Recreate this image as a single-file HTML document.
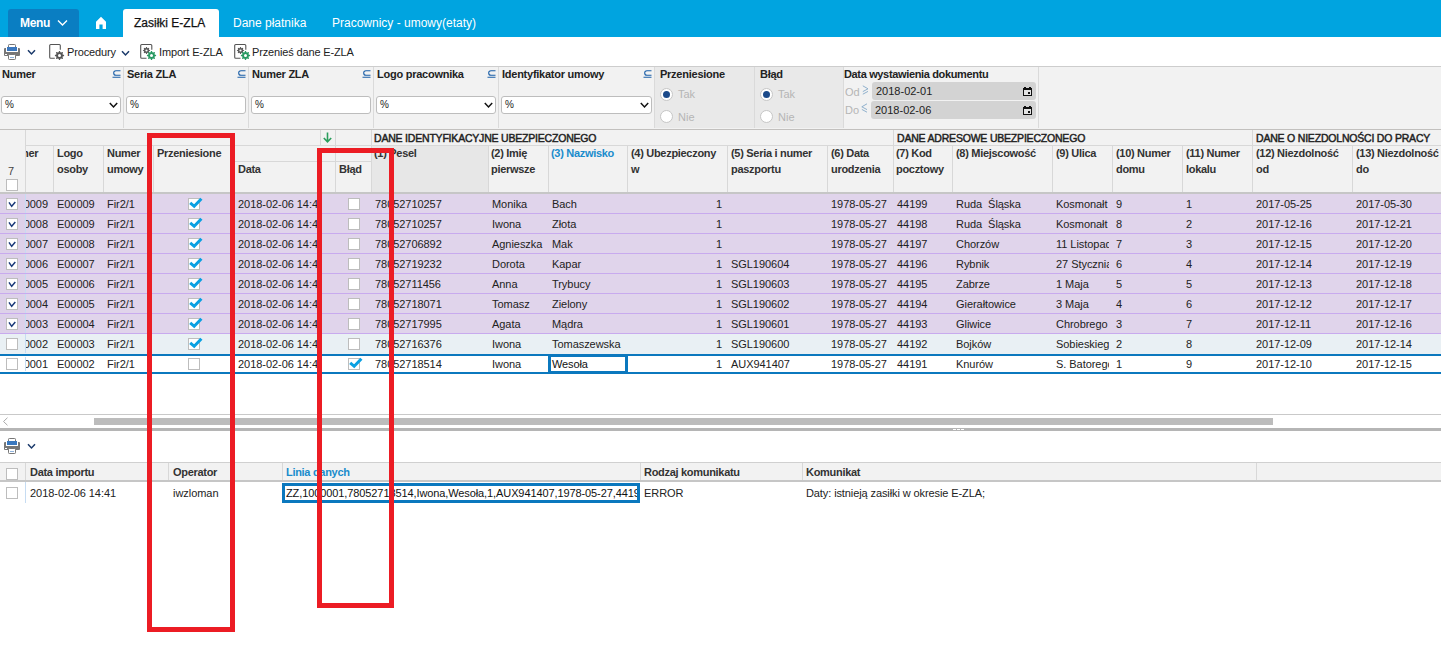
<!DOCTYPE html><html><head><meta charset="utf-8"><style>
*{margin:0;padding:0;box-sizing:border-box}
html,body{width:1441px;height:664px;overflow:hidden;background:#fff;font-family:"Liberation Sans",sans-serif;font-size:11px;color:#222}
.abs{position:absolute}
.t{position:absolute;white-space:nowrap;line-height:12px}
.b{font-weight:bold}
.ln{position:absolute;background:#d9d9d9}
.cb{position:absolute;width:12px;height:12px;background:#fff;border:1px solid #bdbdbd}
.clip{position:absolute;overflow:hidden}
</style></head><body>
<div class="abs" style="left:0px;top:0px;width:1441px;height:37px;background:#00a4e0;"></div>
<div class="abs" style="left:8px;top:9px;width:71px;height:28px;background:#0a7ec2;border-radius:3px 3px 0 0"></div>
<div class="t" style="left:20px;top:16px;color:#fff;font-weight:bold;font-size:12px;line-height:14px;letter-spacing:-0.3px">Menu</div>
<svg class="abs" style="left:57px;top:19px" width="11" height="8" viewBox="0 0 11 8"><path d="M1 1.5 L5.5 6 L10 1.5" fill="none" stroke="#fff" stroke-width="1.4"/></svg>
<svg class="abs" style="left:95px;top:16px" width="12" height="14" viewBox="0 0 12 14"><path d="M6 0.8 L11 5.8 L11 13 L7.6 13 L7.6 8.6 L4.4 8.6 L4.4 13 L1 13 L1 5.8 Z" fill="#fff"/></svg>
<div class="abs" style="left:123px;top:9px;width:96px;height:28px;background:#fff;border-radius:3px 3px 0 0"></div>
<div class="t" style="left:134px;top:16px;color:#111;font-size:12px;line-height:14px;-webkit-text-stroke:0.25px #111">Zasiłki E-ZLA</div>
<div class="t" style="left:233px;top:16px;color:#fff;font-size:12px;line-height:14px">Dane płatnika</div>
<div class="t" style="left:332px;top:16px;color:#fff;font-size:12px;line-height:14px">Pracownicy - umowy(etaty)</div>
<svg class="abs" style="left:4px;top:44px" width="16" height="16" viewBox="0 0 16 16">
<rect x="4.5" y="0.5" width="7" height="4" rx="0.8" fill="#fff" stroke="#777" stroke-width="1"/>
<rect x="0" y="4" width="16" height="8" rx="1" fill="#777"/>
<rect x="2" y="4" width="12" height="4" fill="#fff"/>
<rect x="3" y="3" width="10" height="4" fill="#3a78bf"/>
<rect x="1" y="10" width="2" height="1" fill="#fff"/>
<rect x="4.5" y="10.5" width="7" height="5" rx="0.8" fill="#fff" stroke="#777" stroke-width="1"/>
<rect x="6" y="13" width="4" height="1" fill="#8eb2dc"/>
</svg>
<svg class="abs" style="left:27px;top:49px" width="9" height="7" viewBox="0 0 9 7"><path d="M1 1.2 L4.5 5 L8 1.2" fill="none" stroke="#1b3a6b" stroke-width="1.5"/></svg>
<svg class="abs" style="left:48px;top:43px" width="18" height="18" viewBox="0 0 18 18"><path d="M12.3 6.7 V2.5 A1 1 0 0 0 11.3 1.5 H2.7 A1 1 0 0 0 1.7 2.5 V14.3 A1 1 0 0 0 2.7 15.3 H6.8" fill="none" stroke="#555" stroke-width="1.1"/><polygon points="11.05,7.92 11.95,7.92 12.49,9.24 13.10,9.50 14.42,8.94 15.06,9.58 14.50,10.90 14.76,11.51 16.08,12.05 16.08,12.95 14.76,13.49 14.50,14.10 15.06,15.42 14.42,16.06 13.10,15.50 12.49,15.76 11.95,17.08 11.05,17.08 10.51,15.76 9.90,15.50 8.58,16.06 7.94,15.42 8.50,14.10 8.24,13.49 6.92,12.95 6.92,12.05 8.24,11.51 8.50,10.90 7.94,9.58 8.58,8.94 9.90,9.50 10.51,9.24" fill="#555"/><circle cx="11.5" cy="12.5" r="1.50" fill="#fff"/></svg>
<div class="t" style="left:67px;top:46px;font-size:11px;color:#222;letter-spacing:-0.15px">Procedury</div>
<svg class="abs" style="left:121px;top:50px" width="9" height="7" viewBox="0 0 9 7"><path d="M1 1.2 L4.5 5 L8 1.2" fill="none" stroke="#1b3a6b" stroke-width="1.5"/></svg>
<svg class="abs" style="left:139px;top:43px" width="18" height="18" viewBox="0 0 18 18"><path d="M12.8 6.7 V2.5 A1 1 0 0 0 11.8 1.5 H2.7 A1 1 0 0 0 1.7 2.5 V14.3 A1 1 0 0 0 2.7 15.3 H7.5" fill="none" stroke="#555" stroke-width="1.1"/><polygon points="7.15,3.92 7.85,3.92 8.27,4.95 8.76,5.15 9.78,4.72 10.28,5.22 9.85,6.24 10.05,6.73 11.08,7.15 11.08,7.85 10.05,8.27 9.85,8.76 10.28,9.78 9.78,10.28 8.76,9.85 8.27,10.05 7.85,11.08 7.15,11.08 6.73,10.05 6.24,9.85 5.22,10.28 4.72,9.78 5.15,8.76 4.95,8.27 3.92,7.85 3.92,7.15 4.95,6.73 5.15,6.24 4.72,5.22 5.22,4.72 6.24,5.15 6.73,4.95" fill="#5a5a5a"/><circle cx="7.5" cy="7.5" r="1.10" fill="#fff"/><polygon points="12.05,7.92 12.95,7.92 13.49,9.24 14.10,9.50 15.42,8.94 16.06,9.58 15.50,10.90 15.76,11.51 17.08,12.05 17.08,12.95 15.76,13.49 15.50,14.10 16.06,15.42 15.42,16.06 14.10,15.50 13.49,15.76 12.95,17.08 12.05,17.08 11.51,15.76 10.90,15.50 9.58,16.06 8.94,15.42 9.50,14.10 9.24,13.49 7.92,12.95 7.92,12.05 9.24,11.51 9.50,10.90 8.94,9.58 9.58,8.94 10.90,9.50 11.51,9.24" fill="#2a9a63"/><circle cx="12.5" cy="12.5" r="1.50" fill="#fff"/></svg>
<div class="t" style="left:159px;top:46px;font-size:11px;color:#222;letter-spacing:-0.15px">Import E-ZLA</div>
<svg class="abs" style="left:233px;top:43px" width="18" height="18" viewBox="0 0 18 18"><path d="M12.8 6.7 V2.5 A1 1 0 0 0 11.8 1.5 H2.7 A1 1 0 0 0 1.7 2.5 V14.3 A1 1 0 0 0 2.7 15.3 H7.5" fill="none" stroke="#555" stroke-width="1.1"/><polygon points="7.15,3.92 7.85,3.92 8.27,4.95 8.76,5.15 9.78,4.72 10.28,5.22 9.85,6.24 10.05,6.73 11.08,7.15 11.08,7.85 10.05,8.27 9.85,8.76 10.28,9.78 9.78,10.28 8.76,9.85 8.27,10.05 7.85,11.08 7.15,11.08 6.73,10.05 6.24,9.85 5.22,10.28 4.72,9.78 5.15,8.76 4.95,8.27 3.92,7.85 3.92,7.15 4.95,6.73 5.15,6.24 4.72,5.22 5.22,4.72 6.24,5.15 6.73,4.95" fill="#5a5a5a"/><circle cx="7.5" cy="7.5" r="1.10" fill="#fff"/><polygon points="12.05,7.92 12.95,7.92 13.49,9.24 14.10,9.50 15.42,8.94 16.06,9.58 15.50,10.90 15.76,11.51 17.08,12.05 17.08,12.95 15.76,13.49 15.50,14.10 16.06,15.42 15.42,16.06 14.10,15.50 13.49,15.76 12.95,17.08 12.05,17.08 11.51,15.76 10.90,15.50 9.58,16.06 8.94,15.42 9.50,14.10 9.24,13.49 7.92,12.95 7.92,12.05 9.24,11.51 9.50,10.90 8.94,9.58 9.58,8.94 10.90,9.50 11.51,9.24" fill="#2a9a63"/><circle cx="12.5" cy="12.5" r="1.50" fill="#fff"/></svg>
<div class="t" style="left:252px;top:46px;font-size:11px;color:#222;letter-spacing:-0.15px">Przenieś dane E-ZLA</div>
<div class="abs" style="left:0px;top:66px;width:1441px;height:64px;background:#f2f2f2;border-top:1px solid #cdcdcd;border-bottom:1px solid #c2c0be"></div>
<div class="abs" style="left:654px;top:67px;width:189px;height:61px;background:#e9e9e9;"></div>
<div class="abs" style="left:123px;top:67px;width:1px;height:61px;background:#dadada;"></div>
<div class="abs" style="left:248px;top:67px;width:1px;height:61px;background:#dadada;"></div>
<div class="abs" style="left:373px;top:67px;width:1px;height:61px;background:#dadada;"></div>
<div class="abs" style="left:498px;top:67px;width:1px;height:61px;background:#dadada;"></div>
<div class="abs" style="left:654px;top:67px;width:1px;height:61px;background:#dadada;"></div>
<div class="abs" style="left:754px;top:67px;width:1px;height:61px;background:#dadada;"></div>
<div class="abs" style="left:843px;top:67px;width:1px;height:61px;background:#dadada;"></div>
<div class="abs" style="left:1038px;top:67px;width:1px;height:61px;background:#dadada;"></div>
<div class="t" style="left:2px;top:68px;font-weight:bold;letter-spacing:-0.25px">Numer</div>
<svg class="abs" style="left:112px;top:70px" width="9" height="8" viewBox="0 0 9 8"><path d="M8.5 0.7 H4 A2.3 2.3 0 0 0 4 5.3 H8.5 M0.5 7.3 H8.5" fill="none" stroke="#1b5fa8" stroke-width="1.1"/></svg>
<div class="abs" style="left:1px;top:96px;width:120px;height:18px;background:#fff;border:1px solid #bdbdbd;border-radius:3px"></div>
<div class="t" style="left:5px;top:99px;font-size:10px">%</div>
<svg class="abs" style="left:109px;top:102px" width="9" height="7" viewBox="0 0 9 7"><path d="M0.8 1 L4.5 5 L8.2 1" fill="none" stroke="#111" stroke-width="1.5"/></svg>
<div class="t" style="left:127px;top:68px;font-weight:bold;letter-spacing:-0.25px">Seria ZLA</div>
<svg class="abs" style="left:237px;top:70px" width="9" height="8" viewBox="0 0 9 8"><path d="M8.5 0.7 H4 A2.3 2.3 0 0 0 4 5.3 H8.5 M0.5 7.3 H8.5" fill="none" stroke="#1b5fa8" stroke-width="1.1"/></svg>
<div class="abs" style="left:126px;top:96px;width:120px;height:18px;background:#fff;border:1px solid #bdbdbd;border-radius:3px"></div>
<div class="t" style="left:130px;top:99px;font-size:10px">%</div>
<div class="t" style="left:252px;top:68px;font-weight:bold;letter-spacing:-0.25px">Numer ZLA</div>
<svg class="abs" style="left:362px;top:70px" width="9" height="8" viewBox="0 0 9 8"><path d="M8.5 0.7 H4 A2.3 2.3 0 0 0 4 5.3 H8.5 M0.5 7.3 H8.5" fill="none" stroke="#1b5fa8" stroke-width="1.1"/></svg>
<div class="abs" style="left:251px;top:96px;width:120px;height:18px;background:#fff;border:1px solid #bdbdbd;border-radius:3px"></div>
<div class="t" style="left:255px;top:99px;font-size:10px">%</div>
<div class="t" style="left:377px;top:68px;font-weight:bold;letter-spacing:-0.25px">Logo pracownika</div>
<svg class="abs" style="left:487px;top:70px" width="9" height="8" viewBox="0 0 9 8"><path d="M8.5 0.7 H4 A2.3 2.3 0 0 0 4 5.3 H8.5 M0.5 7.3 H8.5" fill="none" stroke="#1b5fa8" stroke-width="1.1"/></svg>
<div class="abs" style="left:376px;top:96px;width:120px;height:18px;background:#fff;border:1px solid #bdbdbd;border-radius:3px"></div>
<div class="t" style="left:380px;top:99px;font-size:10px">%</div>
<svg class="abs" style="left:484px;top:102px" width="9" height="7" viewBox="0 0 9 7"><path d="M0.8 1 L4.5 5 L8.2 1" fill="none" stroke="#111" stroke-width="1.5"/></svg>
<div class="t" style="left:502px;top:68px;font-weight:bold;letter-spacing:-0.25px">Identyfikator umowy</div>
<svg class="abs" style="left:643px;top:70px" width="9" height="8" viewBox="0 0 9 8"><path d="M8.5 0.7 H4 A2.3 2.3 0 0 0 4 5.3 H8.5 M0.5 7.3 H8.5" fill="none" stroke="#1b5fa8" stroke-width="1.1"/></svg>
<div class="abs" style="left:501px;top:96px;width:151px;height:18px;background:#fff;border:1px solid #bdbdbd;border-radius:3px"></div>
<div class="t" style="left:505px;top:99px;font-size:10px">%</div>
<svg class="abs" style="left:640px;top:102px" width="9" height="7" viewBox="0 0 9 7"><path d="M0.8 1 L4.5 5 L8.2 1" fill="none" stroke="#111" stroke-width="1.5"/></svg>
<div class="t" style="left:660px;top:68px;font-weight:bold;letter-spacing:-0.25px">Przeniesione</div>
<div class="abs" style="left:660px;top:88px;width:13px;height:13px;border-radius:50%;background:#fff;border:1px solid #c6c6c6"></div>
<div class="abs" style="left:663px;top:91px;width:7px;height:7px;border-radius:50%;background:#1b4a8a"></div>
<div class="t" style="left:678px;top:88px;color:#b5b5b5;font-size:11px">Tak</div>
<div class="abs" style="left:660px;top:110px;width:13px;height:13px;border-radius:50%;background:#fff;border:1px solid #c6c6c6"></div>
<div class="t" style="left:678px;top:111px;color:#b5b5b5;font-size:11px">Nie</div>
<div class="t" style="left:760px;top:68px;font-weight:bold;letter-spacing:-0.25px">Błąd</div>
<div class="abs" style="left:760px;top:88px;width:13px;height:13px;border-radius:50%;background:#fff;border:1px solid #c6c6c6"></div>
<div class="abs" style="left:763px;top:91px;width:7px;height:7px;border-radius:50%;background:#1b4a8a"></div>
<div class="t" style="left:778px;top:88px;color:#b5b5b5;font-size:11px">Tak</div>
<div class="abs" style="left:760px;top:110px;width:13px;height:13px;border-radius:50%;background:#fff;border:1px solid #c6c6c6"></div>
<div class="t" style="left:778px;top:111px;color:#b5b5b5;font-size:11px">Nie</div>
<div class="t" style="left:844px;top:68px;font-weight:bold;letter-spacing:-0.35px">Data wystawienia dokumentu</div>
<div class="t" style="left:845px;top:86px;color:#b5b5b5">Od</div>
<svg class="abs" style="left:862px;top:85px" width="7" height="10" viewBox="0 0 7 10"><path d="M0.8 0.8 L6 3.8 L0.8 6.6 M0.8 9.2 L6 6.4" fill="none" stroke="#8fb0cc" stroke-width="1"/></svg>
<div class="abs" style="left:872px;top:82px;width:164px;height:18px;background:#d3d3d3;border-radius:3px"></div>
<div class="t" style="left:876px;top:85px;font-size:11px;color:#222">2018-02-01</div>
<svg class="abs" style="left:1023px;top:87px" width="9" height="9" viewBox="0 0 9 9" shape-rendering="crispEdges"><rect x="1" y="0" width="2" height="1" fill="#111"/><rect x="6" y="0" width="2" height="1" fill="#111"/><rect x="0" y="1" width="9" height="2" fill="#111"/><rect x="0" y="1" width="1" height="8" fill="#111"/><rect x="8" y="1" width="1" height="8" fill="#111"/><rect x="0" y="8" width="9" height="1" fill="#111"/><rect x="1" y="3" width="7" height="5" fill="#e4e4e4"/><rect x="5" y="5" width="2" height="2" fill="#111"/></svg>
<div class="t" style="left:845px;top:104px;color:#b5b5b5">Do</div>
<svg class="abs" style="left:861px;top:103px" width="7" height="10" viewBox="0 0 7 10"><path d="M6 0.8 L0.8 3.8 L6 6.6 M6 9.2 L0.8 6.4" fill="none" stroke="#8fb0cc" stroke-width="1"/></svg>
<div class="abs" style="left:871px;top:101px;width:165px;height:18px;background:#d3d3d3;border-radius:3px"></div>
<div class="t" style="left:875px;top:104px;font-size:11px;color:#222">2018-02-06</div>
<svg class="abs" style="left:1023px;top:106px" width="9" height="9" viewBox="0 0 9 9" shape-rendering="crispEdges"><rect x="1" y="0" width="2" height="1" fill="#111"/><rect x="6" y="0" width="2" height="1" fill="#111"/><rect x="0" y="1" width="9" height="2" fill="#111"/><rect x="0" y="1" width="1" height="8" fill="#111"/><rect x="8" y="1" width="1" height="8" fill="#111"/><rect x="0" y="8" width="9" height="1" fill="#111"/><rect x="1" y="3" width="7" height="5" fill="#e4e4e4"/><rect x="5" y="5" width="2" height="2" fill="#111"/></svg>
<div class="abs" style="left:0px;top:130px;width:1441px;height:62px;background:#f2f2f2;"></div>
<div class="abs" style="left:371px;top:146px;width:117px;height:46px;background:#e7e7e7;"></div>
<div class="abs" style="left:0px;top:192px;width:1441px;height:2px;background:#c6c6c6;"></div>
<div class="abs" style="left:25px;top:145px;width:1416px;height:1px;background:#d8d8d8;"></div>
<div class="abs" style="left:234px;top:161px;width:137px;height:1px;background:#d8d8d8;"></div>
<div class="abs" style="left:25px;top:130px;width:1px;height:62px;background:#d8d8d8;"></div>
<div class="abs" style="left:53px;top:145px;width:1px;height:47px;background:#d8d8d8;"></div>
<div class="abs" style="left:103px;top:145px;width:1px;height:47px;background:#d8d8d8;"></div>
<div class="abs" style="left:153px;top:145px;width:1px;height:47px;background:#d8d8d8;"></div>
<div class="abs" style="left:234px;top:145px;width:1px;height:47px;background:#d8d8d8;"></div>
<div class="abs" style="left:320px;top:130px;width:1px;height:15px;background:#d8d8d8;"></div>
<div class="abs" style="left:335px;top:130px;width:1px;height:62px;background:#d8d8d8;"></div>
<div class="abs" style="left:371px;top:130px;width:1px;height:62px;background:#d8d8d8;"></div>
<div class="abs" style="left:488px;top:145px;width:1px;height:47px;background:#d8d8d8;"></div>
<div class="abs" style="left:548px;top:145px;width:1px;height:47px;background:#d8d8d8;"></div>
<div class="abs" style="left:627px;top:145px;width:1px;height:47px;background:#d8d8d8;"></div>
<div class="abs" style="left:727px;top:145px;width:1px;height:47px;background:#d8d8d8;"></div>
<div class="abs" style="left:827px;top:145px;width:1px;height:47px;background:#d8d8d8;"></div>
<div class="abs" style="left:893px;top:130px;width:1px;height:62px;background:#d8d8d8;"></div>
<div class="abs" style="left:952px;top:145px;width:1px;height:47px;background:#d8d8d8;"></div>
<div class="abs" style="left:1052px;top:145px;width:1px;height:47px;background:#d8d8d8;"></div>
<div class="abs" style="left:1112px;top:145px;width:1px;height:47px;background:#d8d8d8;"></div>
<div class="abs" style="left:1182px;top:145px;width:1px;height:47px;background:#d8d8d8;"></div>
<div class="abs" style="left:1252px;top:130px;width:1px;height:62px;background:#d8d8d8;"></div>
<div class="abs" style="left:1352px;top:145px;width:1px;height:47px;background:#d8d8d8;"></div>
<div class="t" style="left:374px;top:132px;color:#222;letter-spacing:-0.2px;font-size:10.5px;-webkit-text-stroke:0.45px #222">DANE IDENTYFIKACYJNE UBEZPIECZONEGO</div>
<div class="t" style="left:897px;top:132px;color:#222;letter-spacing:-0.2px;font-size:10.5px;-webkit-text-stroke:0.45px #222">DANE ADRESOWE UBEZPIECZONEGO</div>
<div class="t" style="left:1256px;top:132px;color:#222;letter-spacing:-0.2px;font-size:10.5px;-webkit-text-stroke:0.45px #222">DANE O NIEZDOLNOŚCI DO PRACY</div>
<svg class="abs" style="left:323px;top:132px" width="9" height="11" viewBox="0 0 9 11"><path d="M4.5 0.5 V10 M0.8 6 L4.5 9.8 L8.2 6" fill="none" stroke="#2a9d5c" stroke-width="1.6"/></svg>
<div class="t" style="left:8px;top:165px;color:#444">7</div>
<div class="cb" style="left:6px;top:179px"></div>
<div class="clip" style="left:26px;top:145px;width:27px;height:40px"><div class="t" style="left:-21px;top:0;font-weight:bold;color:#333;letter-spacing:-0.3px;line-height:16px;">Numer</div></div>
<div class="t" style="left:57px;top:145px;font-weight:bold;color:#333;letter-spacing:-0.3px;line-height:16px;">Logo<br>osoby</div>
<div class="t" style="left:107px;top:145px;font-weight:bold;color:#333;letter-spacing:-0.3px;line-height:16px;">Numer<br>umowy</div>
<div class="t" style="left:157px;top:145px;font-weight:bold;color:#333;letter-spacing:-0.3px;line-height:16px;">Przeniesione</div>
<div class="t" style="left:238px;top:161px;font-weight:bold;color:#333;letter-spacing:-0.3px;line-height:16px;">Data</div>
<div class="t" style="left:339px;top:161px;font-weight:bold;color:#333;letter-spacing:-0.3px;line-height:16px;">Błąd</div>
<div class="t" style="left:374px;top:145px;font-weight:bold;color:#333;letter-spacing:-0.3px;line-height:16px;">(1) Pesel</div>
<div class="t" style="left:491px;top:145px;font-weight:bold;color:#333;letter-spacing:-0.3px;line-height:16px;">(2) Imię<br>pierwsze</div>
<div class="t" style="left:551px;top:145px;font-weight:bold;color:#333;letter-spacing:-0.3px;line-height:16px;color:#1a8ccc">(3) Nazwisko</div>
<div class="t" style="left:631px;top:145px;font-weight:bold;color:#333;letter-spacing:-0.3px;line-height:16px;">(4) Ubezpieczony<br>w</div>
<div class="t" style="left:731px;top:145px;font-weight:bold;color:#333;letter-spacing:-0.3px;line-height:16px;">(5) Seria i numer<br>paszportu</div>
<div class="t" style="left:831px;top:145px;font-weight:bold;color:#333;letter-spacing:-0.3px;line-height:16px;">(6) Data<br>urodzenia</div>
<div class="t" style="left:896px;top:145px;font-weight:bold;color:#333;letter-spacing:-0.3px;line-height:16px;">(7) Kod<br>pocztowy</div>
<div class="t" style="left:956px;top:145px;font-weight:bold;color:#333;letter-spacing:-0.3px;line-height:16px;">(8) Miejscowość</div>
<div class="t" style="left:1056px;top:145px;font-weight:bold;color:#333;letter-spacing:-0.3px;line-height:16px;">(9) Ulica</div>
<div class="t" style="left:1116px;top:145px;font-weight:bold;color:#333;letter-spacing:-0.3px;line-height:16px;">(10) Numer<br>domu</div>
<div class="t" style="left:1186px;top:145px;font-weight:bold;color:#333;letter-spacing:-0.3px;line-height:16px;">(11) Numer<br>lokalu</div>
<div class="t" style="left:1256px;top:145px;font-weight:bold;color:#333;letter-spacing:-0.3px;line-height:16px;">(12) Niezdolność<br>od</div>
<div class="t" style="left:1356px;top:145px;font-weight:bold;color:#333;letter-spacing:-0.3px;line-height:16px;">(13) Niezdolność<br>do</div>
<div class="abs" style="left:0px;top:194px;width:1441px;height:19px;background:#e0d4eb;"></div>
<div class="abs" style="left:0px;top:194px;width:25px;height:19px;background:#ddd1e9;"></div>
<div class="abs" style="left:0px;top:213px;width:1441px;height:1px;background:#c8aaee;"></div>
<div class="abs" style="left:25px;top:194px;width:1px;height:19px;background:#c6dcf2;"></div>
<div class="cb" style="left:6px;top:198px"></div>
<svg class="abs" style="left:6px;top:198px" width="12" height="12" viewBox="0 0 12 12"><path d="M3 4.3 L5.7 8.3 L9.3 4" fill="none" stroke="#1b3a7a" stroke-width="1.5"/></svg>
<div class="clip" style="left:26px;top:198px;width:27px;height:14px"><div class="t" style="right:5px;top:0;letter-spacing:-0.05px;color:#222">0009</div></div>
<div class="clip" style="left:53px;top:198px;width:47px;height:14px"><div class="t" style="left:4px;top:0;letter-spacing:-0.05px;color:#222">E00009</div></div>
<div class="clip" style="left:103px;top:198px;width:47px;height:14px"><div class="t" style="left:4px;top:0;letter-spacing:-0.05px;color:#222">Fir2/1</div></div>
<div class="cb" style="left:188px;top:198px"></div>
<svg class="abs" style="left:188px;top:196px" width="16" height="14" viewBox="0 0 16 14"><path d="M2.2 6.8 L6.2 10.3 L13.4 2.8" fill="none" stroke="#0aa0e2" stroke-width="3"/></svg>
<div class="clip" style="left:234px;top:198px;width:83px;height:14px"><div class="t" style="left:4px;top:0;letter-spacing:-0.05px;color:#222">2018-02-06 14:41</div></div>
<div class="cb" style="left:348px;top:198px"></div>
<div class="clip" style="left:371px;top:198px;width:114px;height:14px"><div class="t" style="left:4px;top:0;letter-spacing:-0.05px;color:#222">78052710257</div></div>
<div class="clip" style="left:488px;top:198px;width:57px;height:14px"><div class="t" style="left:4px;top:0;letter-spacing:-0.05px;color:#222">Monika</div></div>
<div class="clip" style="left:548px;top:198px;width:76px;height:14px"><div class="t" style="left:4px;top:0;letter-spacing:-0.05px;color:#222">Bach</div></div>
<div class="clip" style="left:627px;top:198px;width:100px;height:14px"><div class="t" style="right:5px;top:0;letter-spacing:-0.05px;color:#222">1</div></div>
<div class="clip" style="left:727px;top:198px;width:97px;height:14px"><div class="t" style="left:4px;top:0;letter-spacing:-0.05px;color:#222"></div></div>
<div class="clip" style="left:827px;top:198px;width:63px;height:14px"><div class="t" style="left:4px;top:0;letter-spacing:-0.05px;color:#222">1978-05-27</div></div>
<div class="clip" style="left:893px;top:198px;width:56px;height:14px"><div class="t" style="left:4px;top:0;letter-spacing:-0.05px;color:#222">44199</div></div>
<div class="clip" style="left:952px;top:198px;width:97px;height:14px"><div class="t" style="left:4px;top:0;letter-spacing:-0.05px;color:#222">Ruda&nbsp; Śląska</div></div>
<div class="clip" style="left:1052px;top:198px;width:57px;height:14px"><div class="t" style="left:4px;top:0;letter-spacing:-0.05px;color:#222">Kosmonałt</div></div>
<div class="clip" style="left:1112px;top:198px;width:67px;height:14px"><div class="t" style="left:4px;top:0;letter-spacing:-0.05px;color:#222">9</div></div>
<div class="clip" style="left:1182px;top:198px;width:67px;height:14px"><div class="t" style="left:4px;top:0;letter-spacing:-0.05px;color:#222">1</div></div>
<div class="clip" style="left:1252px;top:198px;width:97px;height:14px"><div class="t" style="left:4px;top:0;letter-spacing:-0.05px;color:#222">2017-05-25</div></div>
<div class="clip" style="left:1352px;top:198px;width:86px;height:14px"><div class="t" style="left:4px;top:0;letter-spacing:-0.05px;color:#222">2017-05-30</div></div>
<div class="abs" style="left:0px;top:214px;width:1441px;height:19px;background:#e0d4eb;"></div>
<div class="abs" style="left:0px;top:214px;width:25px;height:19px;background:#ddd1e9;"></div>
<div class="abs" style="left:0px;top:233px;width:1441px;height:1px;background:#c8aaee;"></div>
<div class="abs" style="left:25px;top:214px;width:1px;height:19px;background:#c6dcf2;"></div>
<div class="cb" style="left:6px;top:218px"></div>
<svg class="abs" style="left:6px;top:218px" width="12" height="12" viewBox="0 0 12 12"><path d="M3 4.3 L5.7 8.3 L9.3 4" fill="none" stroke="#1b3a7a" stroke-width="1.5"/></svg>
<div class="clip" style="left:26px;top:218px;width:27px;height:14px"><div class="t" style="right:5px;top:0;letter-spacing:-0.05px;color:#222">0008</div></div>
<div class="clip" style="left:53px;top:218px;width:47px;height:14px"><div class="t" style="left:4px;top:0;letter-spacing:-0.05px;color:#222">E00009</div></div>
<div class="clip" style="left:103px;top:218px;width:47px;height:14px"><div class="t" style="left:4px;top:0;letter-spacing:-0.05px;color:#222">Fir2/1</div></div>
<div class="cb" style="left:188px;top:218px"></div>
<svg class="abs" style="left:188px;top:216px" width="16" height="14" viewBox="0 0 16 14"><path d="M2.2 6.8 L6.2 10.3 L13.4 2.8" fill="none" stroke="#0aa0e2" stroke-width="3"/></svg>
<div class="clip" style="left:234px;top:218px;width:83px;height:14px"><div class="t" style="left:4px;top:0;letter-spacing:-0.05px;color:#222">2018-02-06 14:41</div></div>
<div class="cb" style="left:348px;top:218px"></div>
<div class="clip" style="left:371px;top:218px;width:114px;height:14px"><div class="t" style="left:4px;top:0;letter-spacing:-0.05px;color:#222">78052710257</div></div>
<div class="clip" style="left:488px;top:218px;width:57px;height:14px"><div class="t" style="left:4px;top:0;letter-spacing:-0.05px;color:#222">Iwona</div></div>
<div class="clip" style="left:548px;top:218px;width:76px;height:14px"><div class="t" style="left:4px;top:0;letter-spacing:-0.05px;color:#222">Złota</div></div>
<div class="clip" style="left:627px;top:218px;width:100px;height:14px"><div class="t" style="right:5px;top:0;letter-spacing:-0.05px;color:#222">1</div></div>
<div class="clip" style="left:727px;top:218px;width:97px;height:14px"><div class="t" style="left:4px;top:0;letter-spacing:-0.05px;color:#222"></div></div>
<div class="clip" style="left:827px;top:218px;width:63px;height:14px"><div class="t" style="left:4px;top:0;letter-spacing:-0.05px;color:#222">1978-05-27</div></div>
<div class="clip" style="left:893px;top:218px;width:56px;height:14px"><div class="t" style="left:4px;top:0;letter-spacing:-0.05px;color:#222">44198</div></div>
<div class="clip" style="left:952px;top:218px;width:97px;height:14px"><div class="t" style="left:4px;top:0;letter-spacing:-0.05px;color:#222">Ruda&nbsp; Śląska</div></div>
<div class="clip" style="left:1052px;top:218px;width:57px;height:14px"><div class="t" style="left:4px;top:0;letter-spacing:-0.05px;color:#222">Kosmonałt</div></div>
<div class="clip" style="left:1112px;top:218px;width:67px;height:14px"><div class="t" style="left:4px;top:0;letter-spacing:-0.05px;color:#222">8</div></div>
<div class="clip" style="left:1182px;top:218px;width:67px;height:14px"><div class="t" style="left:4px;top:0;letter-spacing:-0.05px;color:#222">2</div></div>
<div class="clip" style="left:1252px;top:218px;width:97px;height:14px"><div class="t" style="left:4px;top:0;letter-spacing:-0.05px;color:#222">2017-12-16</div></div>
<div class="clip" style="left:1352px;top:218px;width:86px;height:14px"><div class="t" style="left:4px;top:0;letter-spacing:-0.05px;color:#222">2017-12-21</div></div>
<div class="abs" style="left:0px;top:234px;width:1441px;height:19px;background:#e0d4eb;"></div>
<div class="abs" style="left:0px;top:234px;width:25px;height:19px;background:#ddd1e9;"></div>
<div class="abs" style="left:0px;top:253px;width:1441px;height:1px;background:#c8aaee;"></div>
<div class="abs" style="left:25px;top:234px;width:1px;height:19px;background:#c6dcf2;"></div>
<div class="cb" style="left:6px;top:238px"></div>
<svg class="abs" style="left:6px;top:238px" width="12" height="12" viewBox="0 0 12 12"><path d="M3 4.3 L5.7 8.3 L9.3 4" fill="none" stroke="#1b3a7a" stroke-width="1.5"/></svg>
<div class="clip" style="left:26px;top:238px;width:27px;height:14px"><div class="t" style="right:5px;top:0;letter-spacing:-0.05px;color:#222">0007</div></div>
<div class="clip" style="left:53px;top:238px;width:47px;height:14px"><div class="t" style="left:4px;top:0;letter-spacing:-0.05px;color:#222">E00008</div></div>
<div class="clip" style="left:103px;top:238px;width:47px;height:14px"><div class="t" style="left:4px;top:0;letter-spacing:-0.05px;color:#222">Fir2/1</div></div>
<div class="cb" style="left:188px;top:238px"></div>
<svg class="abs" style="left:188px;top:236px" width="16" height="14" viewBox="0 0 16 14"><path d="M2.2 6.8 L6.2 10.3 L13.4 2.8" fill="none" stroke="#0aa0e2" stroke-width="3"/></svg>
<div class="clip" style="left:234px;top:238px;width:83px;height:14px"><div class="t" style="left:4px;top:0;letter-spacing:-0.05px;color:#222">2018-02-06 14:41</div></div>
<div class="cb" style="left:348px;top:238px"></div>
<div class="clip" style="left:371px;top:238px;width:114px;height:14px"><div class="t" style="left:4px;top:0;letter-spacing:-0.05px;color:#222">78052706892</div></div>
<div class="clip" style="left:488px;top:238px;width:57px;height:14px"><div class="t" style="left:4px;top:0;letter-spacing:-0.05px;color:#222">Agnieszka</div></div>
<div class="clip" style="left:548px;top:238px;width:76px;height:14px"><div class="t" style="left:4px;top:0;letter-spacing:-0.05px;color:#222">Mak</div></div>
<div class="clip" style="left:627px;top:238px;width:100px;height:14px"><div class="t" style="right:5px;top:0;letter-spacing:-0.05px;color:#222">1</div></div>
<div class="clip" style="left:727px;top:238px;width:97px;height:14px"><div class="t" style="left:4px;top:0;letter-spacing:-0.05px;color:#222"></div></div>
<div class="clip" style="left:827px;top:238px;width:63px;height:14px"><div class="t" style="left:4px;top:0;letter-spacing:-0.05px;color:#222">1978-05-27</div></div>
<div class="clip" style="left:893px;top:238px;width:56px;height:14px"><div class="t" style="left:4px;top:0;letter-spacing:-0.05px;color:#222">44197</div></div>
<div class="clip" style="left:952px;top:238px;width:97px;height:14px"><div class="t" style="left:4px;top:0;letter-spacing:-0.05px;color:#222">Chorzów</div></div>
<div class="clip" style="left:1052px;top:238px;width:57px;height:14px"><div class="t" style="left:4px;top:0;letter-spacing:-0.05px;color:#222">11 Listopada</div></div>
<div class="clip" style="left:1112px;top:238px;width:67px;height:14px"><div class="t" style="left:4px;top:0;letter-spacing:-0.05px;color:#222">7</div></div>
<div class="clip" style="left:1182px;top:238px;width:67px;height:14px"><div class="t" style="left:4px;top:0;letter-spacing:-0.05px;color:#222">3</div></div>
<div class="clip" style="left:1252px;top:238px;width:97px;height:14px"><div class="t" style="left:4px;top:0;letter-spacing:-0.05px;color:#222">2017-12-15</div></div>
<div class="clip" style="left:1352px;top:238px;width:86px;height:14px"><div class="t" style="left:4px;top:0;letter-spacing:-0.05px;color:#222">2017-12-20</div></div>
<div class="abs" style="left:0px;top:254px;width:1441px;height:19px;background:#e0d4eb;"></div>
<div class="abs" style="left:0px;top:254px;width:25px;height:19px;background:#ddd1e9;"></div>
<div class="abs" style="left:0px;top:273px;width:1441px;height:1px;background:#c8aaee;"></div>
<div class="abs" style="left:25px;top:254px;width:1px;height:19px;background:#c6dcf2;"></div>
<div class="cb" style="left:6px;top:258px"></div>
<svg class="abs" style="left:6px;top:258px" width="12" height="12" viewBox="0 0 12 12"><path d="M3 4.3 L5.7 8.3 L9.3 4" fill="none" stroke="#1b3a7a" stroke-width="1.5"/></svg>
<div class="clip" style="left:26px;top:258px;width:27px;height:14px"><div class="t" style="right:5px;top:0;letter-spacing:-0.05px;color:#222">0006</div></div>
<div class="clip" style="left:53px;top:258px;width:47px;height:14px"><div class="t" style="left:4px;top:0;letter-spacing:-0.05px;color:#222">E00007</div></div>
<div class="clip" style="left:103px;top:258px;width:47px;height:14px"><div class="t" style="left:4px;top:0;letter-spacing:-0.05px;color:#222">Fir2/1</div></div>
<div class="cb" style="left:188px;top:258px"></div>
<svg class="abs" style="left:188px;top:256px" width="16" height="14" viewBox="0 0 16 14"><path d="M2.2 6.8 L6.2 10.3 L13.4 2.8" fill="none" stroke="#0aa0e2" stroke-width="3"/></svg>
<div class="clip" style="left:234px;top:258px;width:83px;height:14px"><div class="t" style="left:4px;top:0;letter-spacing:-0.05px;color:#222">2018-02-06 14:41</div></div>
<div class="cb" style="left:348px;top:258px"></div>
<div class="clip" style="left:371px;top:258px;width:114px;height:14px"><div class="t" style="left:4px;top:0;letter-spacing:-0.05px;color:#222">78052719232</div></div>
<div class="clip" style="left:488px;top:258px;width:57px;height:14px"><div class="t" style="left:4px;top:0;letter-spacing:-0.05px;color:#222">Dorota</div></div>
<div class="clip" style="left:548px;top:258px;width:76px;height:14px"><div class="t" style="left:4px;top:0;letter-spacing:-0.05px;color:#222">Kapar</div></div>
<div class="clip" style="left:627px;top:258px;width:100px;height:14px"><div class="t" style="right:5px;top:0;letter-spacing:-0.05px;color:#222">1</div></div>
<div class="clip" style="left:727px;top:258px;width:97px;height:14px"><div class="t" style="left:4px;top:0;letter-spacing:-0.05px;color:#222">SGL190604</div></div>
<div class="clip" style="left:827px;top:258px;width:63px;height:14px"><div class="t" style="left:4px;top:0;letter-spacing:-0.05px;color:#222">1978-05-27</div></div>
<div class="clip" style="left:893px;top:258px;width:56px;height:14px"><div class="t" style="left:4px;top:0;letter-spacing:-0.05px;color:#222">44196</div></div>
<div class="clip" style="left:952px;top:258px;width:97px;height:14px"><div class="t" style="left:4px;top:0;letter-spacing:-0.05px;color:#222">Rybnik</div></div>
<div class="clip" style="left:1052px;top:258px;width:57px;height:14px"><div class="t" style="left:4px;top:0;letter-spacing:-0.05px;color:#222">27 Stycznia</div></div>
<div class="clip" style="left:1112px;top:258px;width:67px;height:14px"><div class="t" style="left:4px;top:0;letter-spacing:-0.05px;color:#222">6</div></div>
<div class="clip" style="left:1182px;top:258px;width:67px;height:14px"><div class="t" style="left:4px;top:0;letter-spacing:-0.05px;color:#222">4</div></div>
<div class="clip" style="left:1252px;top:258px;width:97px;height:14px"><div class="t" style="left:4px;top:0;letter-spacing:-0.05px;color:#222">2017-12-14</div></div>
<div class="clip" style="left:1352px;top:258px;width:86px;height:14px"><div class="t" style="left:4px;top:0;letter-spacing:-0.05px;color:#222">2017-12-19</div></div>
<div class="abs" style="left:0px;top:274px;width:1441px;height:19px;background:#e0d4eb;"></div>
<div class="abs" style="left:0px;top:274px;width:25px;height:19px;background:#ddd1e9;"></div>
<div class="abs" style="left:0px;top:293px;width:1441px;height:1px;background:#c8aaee;"></div>
<div class="abs" style="left:25px;top:274px;width:1px;height:19px;background:#c6dcf2;"></div>
<div class="cb" style="left:6px;top:278px"></div>
<svg class="abs" style="left:6px;top:278px" width="12" height="12" viewBox="0 0 12 12"><path d="M3 4.3 L5.7 8.3 L9.3 4" fill="none" stroke="#1b3a7a" stroke-width="1.5"/></svg>
<div class="clip" style="left:26px;top:278px;width:27px;height:14px"><div class="t" style="right:5px;top:0;letter-spacing:-0.05px;color:#222">0005</div></div>
<div class="clip" style="left:53px;top:278px;width:47px;height:14px"><div class="t" style="left:4px;top:0;letter-spacing:-0.05px;color:#222">E00006</div></div>
<div class="clip" style="left:103px;top:278px;width:47px;height:14px"><div class="t" style="left:4px;top:0;letter-spacing:-0.05px;color:#222">Fir2/1</div></div>
<div class="cb" style="left:188px;top:278px"></div>
<svg class="abs" style="left:188px;top:276px" width="16" height="14" viewBox="0 0 16 14"><path d="M2.2 6.8 L6.2 10.3 L13.4 2.8" fill="none" stroke="#0aa0e2" stroke-width="3"/></svg>
<div class="clip" style="left:234px;top:278px;width:83px;height:14px"><div class="t" style="left:4px;top:0;letter-spacing:-0.05px;color:#222">2018-02-06 14:41</div></div>
<div class="cb" style="left:348px;top:278px"></div>
<div class="clip" style="left:371px;top:278px;width:114px;height:14px"><div class="t" style="left:4px;top:0;letter-spacing:-0.05px;color:#222">78052711456</div></div>
<div class="clip" style="left:488px;top:278px;width:57px;height:14px"><div class="t" style="left:4px;top:0;letter-spacing:-0.05px;color:#222">Anna</div></div>
<div class="clip" style="left:548px;top:278px;width:76px;height:14px"><div class="t" style="left:4px;top:0;letter-spacing:-0.05px;color:#222">Trybucy</div></div>
<div class="clip" style="left:627px;top:278px;width:100px;height:14px"><div class="t" style="right:5px;top:0;letter-spacing:-0.05px;color:#222">1</div></div>
<div class="clip" style="left:727px;top:278px;width:97px;height:14px"><div class="t" style="left:4px;top:0;letter-spacing:-0.05px;color:#222">SGL190603</div></div>
<div class="clip" style="left:827px;top:278px;width:63px;height:14px"><div class="t" style="left:4px;top:0;letter-spacing:-0.05px;color:#222">1978-05-27</div></div>
<div class="clip" style="left:893px;top:278px;width:56px;height:14px"><div class="t" style="left:4px;top:0;letter-spacing:-0.05px;color:#222">44195</div></div>
<div class="clip" style="left:952px;top:278px;width:97px;height:14px"><div class="t" style="left:4px;top:0;letter-spacing:-0.05px;color:#222">Zabrze</div></div>
<div class="clip" style="left:1052px;top:278px;width:57px;height:14px"><div class="t" style="left:4px;top:0;letter-spacing:-0.05px;color:#222">1 Maja</div></div>
<div class="clip" style="left:1112px;top:278px;width:67px;height:14px"><div class="t" style="left:4px;top:0;letter-spacing:-0.05px;color:#222">5</div></div>
<div class="clip" style="left:1182px;top:278px;width:67px;height:14px"><div class="t" style="left:4px;top:0;letter-spacing:-0.05px;color:#222">5</div></div>
<div class="clip" style="left:1252px;top:278px;width:97px;height:14px"><div class="t" style="left:4px;top:0;letter-spacing:-0.05px;color:#222">2017-12-13</div></div>
<div class="clip" style="left:1352px;top:278px;width:86px;height:14px"><div class="t" style="left:4px;top:0;letter-spacing:-0.05px;color:#222">2017-12-18</div></div>
<div class="abs" style="left:0px;top:294px;width:1441px;height:19px;background:#e0d4eb;"></div>
<div class="abs" style="left:0px;top:294px;width:25px;height:19px;background:#ddd1e9;"></div>
<div class="abs" style="left:0px;top:313px;width:1441px;height:1px;background:#c8aaee;"></div>
<div class="abs" style="left:25px;top:294px;width:1px;height:19px;background:#c6dcf2;"></div>
<div class="cb" style="left:6px;top:298px"></div>
<svg class="abs" style="left:6px;top:298px" width="12" height="12" viewBox="0 0 12 12"><path d="M3 4.3 L5.7 8.3 L9.3 4" fill="none" stroke="#1b3a7a" stroke-width="1.5"/></svg>
<div class="clip" style="left:26px;top:298px;width:27px;height:14px"><div class="t" style="right:5px;top:0;letter-spacing:-0.05px;color:#222">0004</div></div>
<div class="clip" style="left:53px;top:298px;width:47px;height:14px"><div class="t" style="left:4px;top:0;letter-spacing:-0.05px;color:#222">E00005</div></div>
<div class="clip" style="left:103px;top:298px;width:47px;height:14px"><div class="t" style="left:4px;top:0;letter-spacing:-0.05px;color:#222">Fir2/1</div></div>
<div class="cb" style="left:188px;top:298px"></div>
<svg class="abs" style="left:188px;top:296px" width="16" height="14" viewBox="0 0 16 14"><path d="M2.2 6.8 L6.2 10.3 L13.4 2.8" fill="none" stroke="#0aa0e2" stroke-width="3"/></svg>
<div class="clip" style="left:234px;top:298px;width:83px;height:14px"><div class="t" style="left:4px;top:0;letter-spacing:-0.05px;color:#222">2018-02-06 14:41</div></div>
<div class="cb" style="left:348px;top:298px"></div>
<div class="clip" style="left:371px;top:298px;width:114px;height:14px"><div class="t" style="left:4px;top:0;letter-spacing:-0.05px;color:#222">78052718071</div></div>
<div class="clip" style="left:488px;top:298px;width:57px;height:14px"><div class="t" style="left:4px;top:0;letter-spacing:-0.05px;color:#222">Tomasz</div></div>
<div class="clip" style="left:548px;top:298px;width:76px;height:14px"><div class="t" style="left:4px;top:0;letter-spacing:-0.05px;color:#222">Zielony</div></div>
<div class="clip" style="left:627px;top:298px;width:100px;height:14px"><div class="t" style="right:5px;top:0;letter-spacing:-0.05px;color:#222">1</div></div>
<div class="clip" style="left:727px;top:298px;width:97px;height:14px"><div class="t" style="left:4px;top:0;letter-spacing:-0.05px;color:#222">SGL190602</div></div>
<div class="clip" style="left:827px;top:298px;width:63px;height:14px"><div class="t" style="left:4px;top:0;letter-spacing:-0.05px;color:#222">1978-05-27</div></div>
<div class="clip" style="left:893px;top:298px;width:56px;height:14px"><div class="t" style="left:4px;top:0;letter-spacing:-0.05px;color:#222">44194</div></div>
<div class="clip" style="left:952px;top:298px;width:97px;height:14px"><div class="t" style="left:4px;top:0;letter-spacing:-0.05px;color:#222">Gierałtowice</div></div>
<div class="clip" style="left:1052px;top:298px;width:57px;height:14px"><div class="t" style="left:4px;top:0;letter-spacing:-0.05px;color:#222">3 Maja</div></div>
<div class="clip" style="left:1112px;top:298px;width:67px;height:14px"><div class="t" style="left:4px;top:0;letter-spacing:-0.05px;color:#222">4</div></div>
<div class="clip" style="left:1182px;top:298px;width:67px;height:14px"><div class="t" style="left:4px;top:0;letter-spacing:-0.05px;color:#222">6</div></div>
<div class="clip" style="left:1252px;top:298px;width:97px;height:14px"><div class="t" style="left:4px;top:0;letter-spacing:-0.05px;color:#222">2017-12-12</div></div>
<div class="clip" style="left:1352px;top:298px;width:86px;height:14px"><div class="t" style="left:4px;top:0;letter-spacing:-0.05px;color:#222">2017-12-17</div></div>
<div class="abs" style="left:0px;top:314px;width:1441px;height:19px;background:#e0d4eb;"></div>
<div class="abs" style="left:0px;top:314px;width:25px;height:19px;background:#ddd1e9;"></div>
<div class="abs" style="left:0px;top:333px;width:1441px;height:1px;background:#c8aaee;"></div>
<div class="abs" style="left:25px;top:314px;width:1px;height:19px;background:#c6dcf2;"></div>
<div class="cb" style="left:6px;top:318px"></div>
<svg class="abs" style="left:6px;top:318px" width="12" height="12" viewBox="0 0 12 12"><path d="M3 4.3 L5.7 8.3 L9.3 4" fill="none" stroke="#1b3a7a" stroke-width="1.5"/></svg>
<div class="clip" style="left:26px;top:318px;width:27px;height:14px"><div class="t" style="right:5px;top:0;letter-spacing:-0.05px;color:#222">0003</div></div>
<div class="clip" style="left:53px;top:318px;width:47px;height:14px"><div class="t" style="left:4px;top:0;letter-spacing:-0.05px;color:#222">E00004</div></div>
<div class="clip" style="left:103px;top:318px;width:47px;height:14px"><div class="t" style="left:4px;top:0;letter-spacing:-0.05px;color:#222">Fir2/1</div></div>
<div class="cb" style="left:188px;top:318px"></div>
<svg class="abs" style="left:188px;top:316px" width="16" height="14" viewBox="0 0 16 14"><path d="M2.2 6.8 L6.2 10.3 L13.4 2.8" fill="none" stroke="#0aa0e2" stroke-width="3"/></svg>
<div class="clip" style="left:234px;top:318px;width:83px;height:14px"><div class="t" style="left:4px;top:0;letter-spacing:-0.05px;color:#222">2018-02-06 14:41</div></div>
<div class="cb" style="left:348px;top:318px"></div>
<div class="clip" style="left:371px;top:318px;width:114px;height:14px"><div class="t" style="left:4px;top:0;letter-spacing:-0.05px;color:#222">78052717995</div></div>
<div class="clip" style="left:488px;top:318px;width:57px;height:14px"><div class="t" style="left:4px;top:0;letter-spacing:-0.05px;color:#222">Agata</div></div>
<div class="clip" style="left:548px;top:318px;width:76px;height:14px"><div class="t" style="left:4px;top:0;letter-spacing:-0.05px;color:#222">Mądra</div></div>
<div class="clip" style="left:627px;top:318px;width:100px;height:14px"><div class="t" style="right:5px;top:0;letter-spacing:-0.05px;color:#222">1</div></div>
<div class="clip" style="left:727px;top:318px;width:97px;height:14px"><div class="t" style="left:4px;top:0;letter-spacing:-0.05px;color:#222">SGL190601</div></div>
<div class="clip" style="left:827px;top:318px;width:63px;height:14px"><div class="t" style="left:4px;top:0;letter-spacing:-0.05px;color:#222">1978-05-27</div></div>
<div class="clip" style="left:893px;top:318px;width:56px;height:14px"><div class="t" style="left:4px;top:0;letter-spacing:-0.05px;color:#222">44193</div></div>
<div class="clip" style="left:952px;top:318px;width:97px;height:14px"><div class="t" style="left:4px;top:0;letter-spacing:-0.05px;color:#222">Gliwice</div></div>
<div class="clip" style="left:1052px;top:318px;width:57px;height:14px"><div class="t" style="left:4px;top:0;letter-spacing:-0.05px;color:#222">Chrobrego</div></div>
<div class="clip" style="left:1112px;top:318px;width:67px;height:14px"><div class="t" style="left:4px;top:0;letter-spacing:-0.05px;color:#222">3</div></div>
<div class="clip" style="left:1182px;top:318px;width:67px;height:14px"><div class="t" style="left:4px;top:0;letter-spacing:-0.05px;color:#222">7</div></div>
<div class="clip" style="left:1252px;top:318px;width:97px;height:14px"><div class="t" style="left:4px;top:0;letter-spacing:-0.05px;color:#222">2017-12-11</div></div>
<div class="clip" style="left:1352px;top:318px;width:86px;height:14px"><div class="t" style="left:4px;top:0;letter-spacing:-0.05px;color:#222">2017-12-16</div></div>
<div class="abs" style="left:0px;top:334px;width:1441px;height:20px;background:#e9f0f4;"></div>
<div class="abs" style="left:25px;top:334px;width:1px;height:19px;background:#c6dcf2;"></div>
<div class="cb" style="left:6px;top:338px"></div>
<div class="clip" style="left:26px;top:338px;width:27px;height:14px"><div class="t" style="right:5px;top:0;letter-spacing:-0.05px;color:#222">0002</div></div>
<div class="clip" style="left:53px;top:338px;width:47px;height:14px"><div class="t" style="left:4px;top:0;letter-spacing:-0.05px;color:#222">E00003</div></div>
<div class="clip" style="left:103px;top:338px;width:47px;height:14px"><div class="t" style="left:4px;top:0;letter-spacing:-0.05px;color:#222">Fir2/1</div></div>
<div class="cb" style="left:188px;top:338px"></div>
<svg class="abs" style="left:188px;top:336px" width="16" height="14" viewBox="0 0 16 14"><path d="M2.2 6.8 L6.2 10.3 L13.4 2.8" fill="none" stroke="#0aa0e2" stroke-width="3"/></svg>
<div class="clip" style="left:234px;top:338px;width:83px;height:14px"><div class="t" style="left:4px;top:0;letter-spacing:-0.05px;color:#222">2018-02-06 14:41</div></div>
<div class="cb" style="left:348px;top:338px"></div>
<div class="clip" style="left:371px;top:338px;width:114px;height:14px"><div class="t" style="left:4px;top:0;letter-spacing:-0.05px;color:#222">78052716376</div></div>
<div class="clip" style="left:488px;top:338px;width:57px;height:14px"><div class="t" style="left:4px;top:0;letter-spacing:-0.05px;color:#222">Iwona</div></div>
<div class="clip" style="left:548px;top:338px;width:76px;height:14px"><div class="t" style="left:4px;top:0;letter-spacing:-0.05px;color:#222">Tomaszewska</div></div>
<div class="clip" style="left:627px;top:338px;width:100px;height:14px"><div class="t" style="right:5px;top:0;letter-spacing:-0.05px;color:#222">1</div></div>
<div class="clip" style="left:727px;top:338px;width:97px;height:14px"><div class="t" style="left:4px;top:0;letter-spacing:-0.05px;color:#222">SGL190600</div></div>
<div class="clip" style="left:827px;top:338px;width:63px;height:14px"><div class="t" style="left:4px;top:0;letter-spacing:-0.05px;color:#222">1978-05-27</div></div>
<div class="clip" style="left:893px;top:338px;width:56px;height:14px"><div class="t" style="left:4px;top:0;letter-spacing:-0.05px;color:#222">44192</div></div>
<div class="clip" style="left:952px;top:338px;width:97px;height:14px"><div class="t" style="left:4px;top:0;letter-spacing:-0.05px;color:#222">Bojków</div></div>
<div class="clip" style="left:1052px;top:338px;width:57px;height:14px"><div class="t" style="left:4px;top:0;letter-spacing:-0.05px;color:#222">Sobieskiego</div></div>
<div class="clip" style="left:1112px;top:338px;width:67px;height:14px"><div class="t" style="left:4px;top:0;letter-spacing:-0.05px;color:#222">2</div></div>
<div class="clip" style="left:1182px;top:338px;width:67px;height:14px"><div class="t" style="left:4px;top:0;letter-spacing:-0.05px;color:#222">8</div></div>
<div class="clip" style="left:1252px;top:338px;width:97px;height:14px"><div class="t" style="left:4px;top:0;letter-spacing:-0.05px;color:#222">2017-12-09</div></div>
<div class="clip" style="left:1352px;top:338px;width:86px;height:14px"><div class="t" style="left:4px;top:0;letter-spacing:-0.05px;color:#222">2017-12-14</div></div>
<div class="abs" style="left:0px;top:354px;width:1441px;height:20px;background:#fff;border-top:2px solid #0b78be;border-bottom:2px solid #0b78be"></div>
<div class="abs" style="left:25px;top:357px;width:1px;height:14px;background:#c6dcf2;"></div>
<div class="cb" style="left:6px;top:358px"></div>
<div class="clip" style="left:26px;top:358px;width:27px;height:14px"><div class="t" style="right:5px;top:0;letter-spacing:-0.05px;color:#222">0001</div></div>
<div class="clip" style="left:53px;top:358px;width:47px;height:14px"><div class="t" style="left:4px;top:0;letter-spacing:-0.05px;color:#222">E00002</div></div>
<div class="clip" style="left:103px;top:358px;width:47px;height:14px"><div class="t" style="left:4px;top:0;letter-spacing:-0.05px;color:#222">Fir2/1</div></div>
<div class="cb" style="left:188px;top:358px"></div>
<div class="clip" style="left:234px;top:358px;width:83px;height:14px"><div class="t" style="left:4px;top:0;letter-spacing:-0.05px;color:#222">2018-02-06 14:41</div></div>
<div class="cb" style="left:348px;top:358px"></div>
<svg class="abs" style="left:348px;top:356px" width="16" height="14" viewBox="0 0 16 14"><path d="M2.2 6.8 L6.2 10.3 L13.4 2.8" fill="none" stroke="#0aa0e2" stroke-width="3"/></svg>
<div class="clip" style="left:371px;top:358px;width:114px;height:14px"><div class="t" style="left:4px;top:0;letter-spacing:-0.05px;color:#222">78052718514</div></div>
<div class="clip" style="left:488px;top:358px;width:57px;height:14px"><div class="t" style="left:4px;top:0;letter-spacing:-0.05px;color:#222">Iwona</div></div>
<div class="abs" style="left:548px;top:354px;width:80px;height:20px;background:#fff;border:3px solid #0b78be"></div>
<div class="t" style="left:552px;top:358px;color:#111;letter-spacing:-0.1px">Wesoła</div>
<div class="clip" style="left:627px;top:358px;width:100px;height:14px"><div class="t" style="right:5px;top:0;letter-spacing:-0.05px;color:#222">1</div></div>
<div class="clip" style="left:727px;top:358px;width:97px;height:14px"><div class="t" style="left:4px;top:0;letter-spacing:-0.05px;color:#222">AUX941407</div></div>
<div class="clip" style="left:827px;top:358px;width:63px;height:14px"><div class="t" style="left:4px;top:0;letter-spacing:-0.05px;color:#222">1978-05-27</div></div>
<div class="clip" style="left:893px;top:358px;width:56px;height:14px"><div class="t" style="left:4px;top:0;letter-spacing:-0.05px;color:#222">44191</div></div>
<div class="clip" style="left:952px;top:358px;width:97px;height:14px"><div class="t" style="left:4px;top:0;letter-spacing:-0.05px;color:#222">Knurów</div></div>
<div class="clip" style="left:1052px;top:358px;width:57px;height:14px"><div class="t" style="left:4px;top:0;letter-spacing:-0.05px;color:#222">S. Batorego</div></div>
<div class="clip" style="left:1112px;top:358px;width:67px;height:14px"><div class="t" style="left:4px;top:0;letter-spacing:-0.05px;color:#222">1</div></div>
<div class="clip" style="left:1182px;top:358px;width:67px;height:14px"><div class="t" style="left:4px;top:0;letter-spacing:-0.05px;color:#222">9</div></div>
<div class="clip" style="left:1252px;top:358px;width:97px;height:14px"><div class="t" style="left:4px;top:0;letter-spacing:-0.05px;color:#222">2017-12-10</div></div>
<div class="clip" style="left:1352px;top:358px;width:86px;height:14px"><div class="t" style="left:4px;top:0;letter-spacing:-0.05px;color:#222">2017-12-15</div></div>
<div class="abs" style="left:0px;top:414px;width:1441px;height:1px;background:#c9c9c9;"></div>
<div class="abs" style="left:94px;top:418px;width:1179px;height:7px;background:#bcbcbc;"></div>
<svg class="abs" style="left:2px;top:417px" width="7" height="9" viewBox="0 0 7 9"><path d="M5.5 0.7 L1.5 4.5 L5.5 8.3" fill="none" stroke="#aaa" stroke-width="1"/></svg>
<div class="abs" style="left:0px;top:428px;width:1441px;height:3px;background:#b5b5b5;"></div>
<div class="abs" style="left:953px;top:429px;width:3px;height:1px;background:#fff;"></div>
<div class="abs" style="left:957px;top:429px;width:3px;height:1px;background:#fff;"></div>
<div class="abs" style="left:961px;top:429px;width:3px;height:1px;background:#fff;"></div>
<svg class="abs" style="left:4px;top:438px" width="16" height="16" viewBox="0 0 16 16">
<rect x="4.5" y="0.5" width="7" height="4" rx="0.8" fill="#fff" stroke="#777" stroke-width="1"/>
<rect x="0" y="4" width="16" height="8" rx="1" fill="#777"/>
<rect x="2" y="4" width="12" height="4" fill="#fff"/>
<rect x="3" y="3" width="10" height="4" fill="#3a78bf"/>
<rect x="1" y="10" width="2" height="1" fill="#fff"/>
<rect x="4.5" y="10.5" width="7" height="5" rx="0.8" fill="#fff" stroke="#777" stroke-width="1"/>
<rect x="6" y="13" width="4" height="1" fill="#8eb2dc"/>
</svg>
<svg class="abs" style="left:27px;top:443px" width="9" height="7" viewBox="0 0 9 7"><path d="M1 1.2 L4.5 5 L8 1.2" fill="none" stroke="#1b3a6b" stroke-width="1.5"/></svg>
<div class="abs" style="left:0px;top:462px;width:1441px;height:20px;background:#f2f2f2;border-top:1px solid #d0d0d0;border-bottom:2px solid #c6c6c6"></div>
<div class="abs" style="left:25px;top:463px;width:1px;height:17px;background:#d8d8d8;"></div>
<div class="abs" style="left:168px;top:463px;width:1px;height:17px;background:#d8d8d8;"></div>
<div class="abs" style="left:282px;top:463px;width:1px;height:17px;background:#d8d8d8;"></div>
<div class="abs" style="left:640px;top:463px;width:1px;height:17px;background:#d8d8d8;"></div>
<div class="abs" style="left:802px;top:463px;width:1px;height:17px;background:#d8d8d8;"></div>
<div class="abs" style="left:1256px;top:463px;width:1px;height:17px;background:#d8d8d8;"></div>
<div class="cb" style="left:6px;top:468px"></div>
<div class="t" style="left:30px;top:466px;font-weight:bold;color:#333;letter-spacing:-0.3px">Data importu</div>
<div class="t" style="left:173px;top:466px;font-weight:bold;color:#333;letter-spacing:-0.3px">Operator</div>
<div class="t" style="left:286px;top:466px;font-weight:bold;color:#333;letter-spacing:-0.3px;color:#1a8ccc">Linia danych</div>
<div class="t" style="left:644px;top:466px;font-weight:bold;color:#333;letter-spacing:-0.3px">Rodzaj komunikatu</div>
<div class="t" style="left:806px;top:466px;font-weight:bold;color:#333;letter-spacing:-0.3px">Komunikat</div>
<div class="cb" style="left:6px;top:487px"></div>
<div class="abs" style="left:25px;top:482px;width:1px;height:21px;background:#c6dcf2;"></div>
<div class="t" style="left:30px;top:487px;letter-spacing:-0.05px;color:#222">2018-02-06 14:41</div>
<div class="t" style="left:173px;top:487px;letter-spacing:-0.05px;color:#222">iwzloman</div>
<div class="abs" style="left:282px;top:483px;width:358px;height:20px;border:3px solid #0b78be;background:#fff;overflow:hidden"><div class="t" style="left:1px;top:1px;color:#111;letter-spacing:-0.1px;font-size:11px">ZZ,1000001,78052718514,Iwona,Wesoła,1,AUX941407,1978-05-27,44191,Knurów</div></div>
<div class="t" style="left:644px;top:487px;letter-spacing:-0.05px;color:#222">ERROR</div>
<div class="t" style="left:806px;top:487px;letter-spacing:-0.05px;color:#222;letter-spacing:-0.1px">Daty: istnieją zasiłki w okresie E-ZLA;</div>
<div class="abs" style="left:147px;top:133px;width:88px;height:499px;border:5px solid #ec1c24"></div>
<div class="abs" style="left:317px;top:148px;width:77px;height:460px;border:5px solid #ec1c24"></div>
</body></html>
